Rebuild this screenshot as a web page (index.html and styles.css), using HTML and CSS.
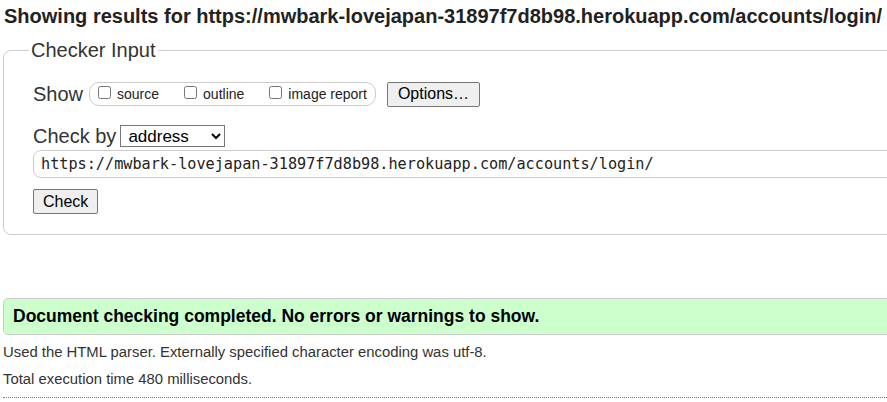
FILE: index.html
```html
<!DOCTYPE html>
<html>
<head>
<meta charset="utf-8">
<link rel="stylesheet" href="styles.css">
</head>
<body>
<div class="page">
  <h2 class="title">Showing results for https://mwbark-lovejapan-31897f7d8b98.herokuapp.com/accounts/login/</h2>
  <fieldset class="checker">
    <legend class="legend">Checker Input</legend>
    <div class="row show-row">
      <span class="lbl">Show</span>
      <span class="opts">
        <label class="opt"><input type="checkbox" class="cb">source</label>
        <label class="opt"><input type="checkbox" class="cb">outline</label>
        <label class="opt last"><input type="checkbox" class="cb">image report</label>
      </span>
      <button class="btn options">Options…</button>
    </div>
    <div class="row by-row">
      <span class="lbl">Check by</span>
      <select class="sel"><option>address</option></select>
    </div>
    <div class="url-row">
      <input class="url" type="text" value="https://mwbark-lovejapan-31897f7d8b98.herokuapp.com/accounts/login/">
    </div>
    <div class="check-row">
      <button class="btn check">Check</button>
    </div>
  </fieldset>
  <p class="success">Document checking completed. No errors or warnings to show.</p>
  <p class="info">Used the HTML parser. Externally specified character encoding was utf-8.</p>
  <p class="info">Total execution time 480 milliseconds.</p>
  <div class="dots"></div>
</div>
</body>
</html>
```

FILE: styles.css
```css
html, body {
  margin: 0;
  padding: 0;
  overflow: hidden;
  background: #fff;
}
body {
  font-family: "Liberation Sans", Arial, sans-serif;
  color: #222;
}
.page {
  width: 1000px;
  padding: 0 0 0 3px;
}
.title {
  margin: 0;
  padding: 4px 0 0 1px;
  font-size: 20px;
  line-height: 24px;
  font-weight: bold;
  color: #222;
}
.checker {
  margin: 10px 0 0 0;
  border: 1px solid #ccc;
  border-radius: 8px;
  padding: 19px 0 20px 29px;
}
.legend {
  font-size: 20px;
  color: #333;
  padding: 0 2px;
  margin-left: -4px;
  line-height: 24px;
}
.row {
  display: flex;
  align-items: center;
}
.lbl {
  font-size: 20px;
  color: #333;
}
.show-row {
  height: 26px;
}
.opts {
  margin-left: 6px;
  border: 1px solid #ccc;
  border-radius: 10px;
  height: 22px;
  display: flex;
  align-items: center;
  padding: 0 8px 0 4px;
}
.opt {
  font-size: 14px;
  color: #222;
  display: flex;
  align-items: center;
  margin-right: 21px;
}
.opt.last {
  margin-right: 0;
}
.cb {
  width: 13px;
  height: 13px;
  margin: 0 6px 4px 4px;
}
.btn {
  font-family: "Liberation Sans", Arial, sans-serif;
  font-size: 16px;
  color: #000;
  background: #efefef;
  border: 1px solid #767676;
  border-radius: 2px;
  height: 25px;
  padding: 0 10px;
}
.options {
  margin-left: 11px;
}
.by-row {
  margin-top: 17px;
  height: 24px;
}
.sel {
  margin-left: 4px;
  width: 105px;
  height: 22px;
  font-family: "Liberation Sans", Arial, sans-serif;
  font-size: 17px;
  color: #000;
  border: 1px solid #767676;
  border-radius: 0;
  background: #fff;
  padding: 0 0 0 3px;
}
.url-row {
  margin-top: 2px;
}
.url {
  display: block;
  width: 900px;
  height: 28px;
  box-sizing: border-box;
  border: 1px solid #ccc;
  border-radius: 8px 0 0 8px;
  padding: 0 7px;
  font-family: "DejaVu Sans Mono", "Liberation Mono", monospace;
  font-size: 15.2px;
  color: #222;
  outline: none;
}
.check-row {
  margin-top: 11px;
}
.check {
  padding: 0 9px;
}
.success {
  margin: 63px 0 0 0;
  background: #ccffcc;
  border: 1px solid #ccc;
  border-radius: 5px;
  height: 35px;
  line-height: 35px;
  padding: 0 0 0 9px;
  font-size: 17.5px;
  font-weight: bold;
  color: #000;
}
.info {
  margin: 7px 0 0 0;
  font-size: 14.85px;
  line-height: 20px;
  color: #333;
}
.dots {
  margin-top: 8px;
  border-top: 1px dotted #777;
}
```
